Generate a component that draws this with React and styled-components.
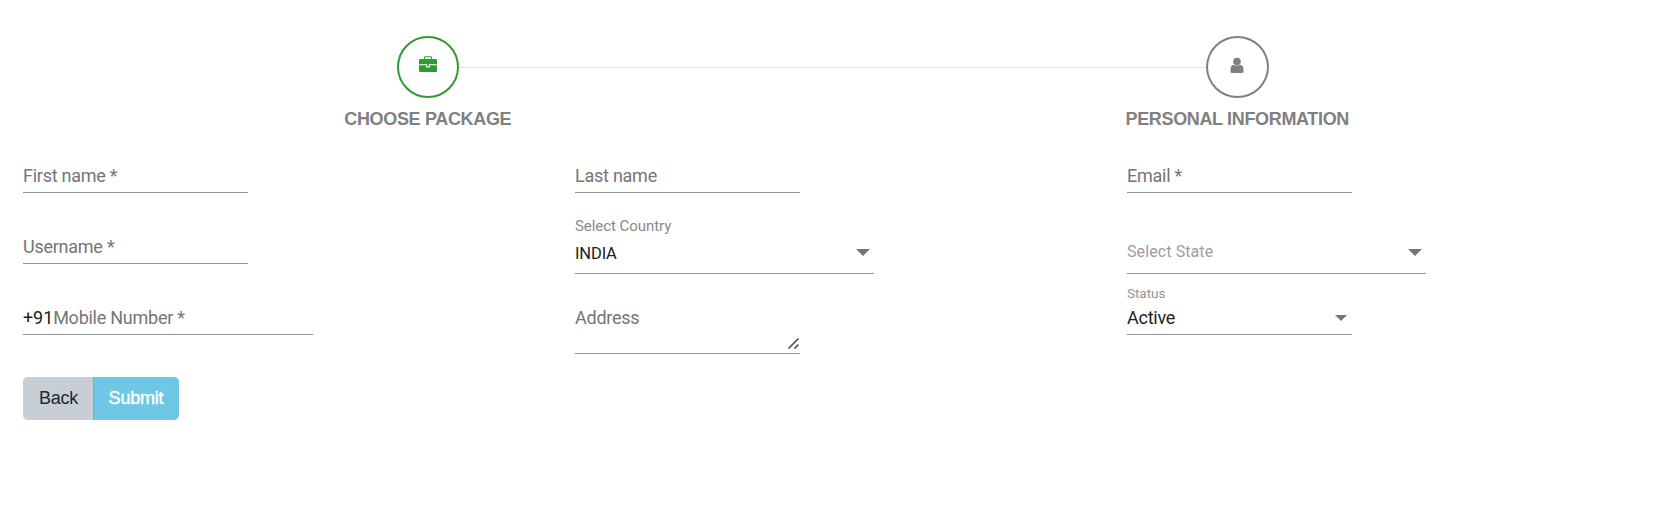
import React from "react";
import styled, { createGlobalStyle } from "styled-components";

const GlobalStyle = createGlobalStyle`
  *, *::before, *::after { box-sizing: border-box; }
  body { margin: 0; background: #fff; font-family: Roboto, sans-serif; }
`;

const Page = styled.main`
  width: 1667px;
  height: 525px;
  padding: 36px 0 0 23px;
  overflow: hidden;
`;

const Stepper = styled.nav`
  display: grid;
  grid-template-columns: 1fr 1fr;
  width: 1619px;
  height: 114px;
  background: linear-gradient(#e2e2e2, #e2e2e2) 405px 31px / 809px 1px no-repeat;
`;

const Step = styled.div`
  display: flex;
  flex-direction: column;
  align-items: center;
`;

const StepCircle = styled.div`
  display: flex;
  align-items: center;
  justify-content: center;
  width: ${(p) => (p.$active ? 62 : 63)}px;
  height: 62px;
  border: 2px solid currentColor;
  border-radius: 50%;
  background: #fff;
  color: ${(p) => (p.$active ? "#339933" : "#808080")};
`;

const StepIcon = styled.svg`
  display: block;
  width: 20px;
  height: 18px;
  margin-bottom: 4px;
`;

const StepTitle = styled.div`
  margin-top: 11px;
  font: bold 18px/20px "Liberation Sans", Arial, sans-serif;
  letter-spacing: -0.34px;
  color: #808080;
  white-space: nowrap;
`;

const Columns = styled.form`
  display: grid;
  grid-template-columns: repeat(3, 552px);
`;

const Column = styled.div`
  display: flex;
  flex-direction: column;
  align-items: flex-start;
`;

const Field = styled.div`
  display: flex;
  justify-content: space-between;
  width: ${(p) => p.$width || 225}px;
  height: ${(p) => p.$height || 27}px;
  margin-top: ${(p) => p.$gap}px;
  border-bottom: 1px solid #949494;
  white-space: nowrap;
`;

const Text = styled.span`
  font-size: ${(p) => p.$size || 18}px;
  line-height: 20px;
  letter-spacing: ${(p) => p.$tracking ?? -0.25}px;
  color: ${(p) => p.$color || "#757575"};
`;

const FloatingLabel = styled.label`
  height: 20px;
  margin-top: ${(p) => p.$gap}px;
  font-size: ${(p) => p.$size}px;
  line-height: ${(p) => p.$line || 20}px;
  letter-spacing: -0.05px;
  color: ${(p) => p.$color};
`;

const Caret = styled.span`
  width: 0;
  height: 0;
  margin: ${(p) => p.$top}px ${(p) => p.$right}px 0 0;
  border: solid transparent;
  border-width: ${(p) => p.$h}px ${(p) => p.$w}px 0;
  border-top-color: #757575;
`;

const ResizeHandle = styled.svg`
  align-self: flex-end;
  width: 11px;
  height: 11px;
  margin: 0 1px 4px 0;
`;

const ButtonGroup = styled.div`
  display: flex;
  height: 43px;
  margin-top: 42px;
`;

const Button = styled.button`
  width: ${(p) => (p.$primary ? 86 : 70)}px;
  padding: ${(p) => (p.$primary ? "0 1px 1px 0" : "0 0 1px 1px")};
  border: 0;
  border-left: ${(p) => (p.$primary ? "1px solid #5bb9d9" : "0")};
  border-radius: ${(p) => (p.$primary ? "0 5px 5px 0" : "5px 0 0 5px")};
  background: ${(p) => (p.$primary ? "#6fc7e6" : "#c8ced6")};
  color: ${(p) => (p.$primary ? "#fff" : "#23282c")};
  font: 18px/20px "Liberation Sans", Arial, sans-serif;
  -webkit-text-stroke: ${(p) => (p.$primary ? "0.4px #fff" : "0")};
  letter-spacing: ${(p) => (p.$primary ? "-0.2px" : "-0.3px")};
`;

const Briefcase = () => (
  <StepIcon viewBox="0 0 20 18" fill="currentColor">
    <path d="M6.5 3V1.5Q6.5 .8 7.3 .8h5.4q.8 0 .8.7V3" fill="none" stroke="currentColor" strokeWidth="1.1" />
    <path d="M2 3h16q1 0 1 1v4.3H1V4q0-1 1-1Z" />
    <path d="M1 9.3h7v2.2h4V9.3h7V15q0 1-1 1H2q-1 0-1-1Z" />
    <path d="M9 8.3h2v2H9Z" />
  </StepIcon>
);

const User = () => (
  <StepIcon viewBox="0 0 20 18" fill="currentColor">
    <circle cx="10" cy="5.6" r="3.8" />
    <path d="M5.8 9h1.4Q10 10.6 12.8 9h1.4q2.3 1 2.3 4.2v2.5q0 1.3-1.3 1.3H4.8q-1.3 0-1.3-1.3v-2.5Q3.5 10 5.8 9Z" />
  </StepIcon>
);

export default function App() {
  return (
    <>
      <GlobalStyle />
      <Page>
        <Stepper>
          <Step>
            <StepCircle $active><Briefcase /></StepCircle>
            <StepTitle>CHOOSE PACKAGE</StepTitle>
          </Step>
          <Step>
            <StepCircle><User /></StepCircle>
            <StepTitle>PERSONAL INFORMATION</StepTitle>
          </Step>
        </Stepper>
        <Columns>
          <Column>
            <Field $gap={16}><Text>First name *</Text></Field>
            <Field $gap={44}><Text>Username *</Text></Field>
            <Field $gap={44} $width={290}>
              <Text><Text $color="#212121" $tracking={-0.1}>+91</Text>Mobile Number *</Text>
            </Field>
            <ButtonGroup>
              <Button type="button">Back</Button>
              <Button type="button" $primary>Submit</Button>
            </ButtonGroup>
          </Column>
          <Column>
            <Field $gap={16}><Text>Last name</Text></Field>
            <FloatingLabel $gap={23} $size={15} $color="#8a8a8a">Select Country</FloatingLabel>
            <Field $gap={8} $width={299} $height={30}>
              <Text $size={16.5} $color="#212121" $tracking={-0.15}>INDIA</Text>
              <Caret $top={5} $right={4} $w={7} $h={7} />
            </Field>
            <Field $gap={34} $height={46}>
              <Text>Address</Text>
              <ResizeHandle viewBox="0 0 11 11" stroke="#424242" strokeWidth="1.5">
                <path d="M.5 10.5 10.5.5M6.5 10.5l4-4" />
              </ResizeHandle>
            </Field>
          </Column>
          <Column>
            <Field $gap={16}><Text>Email *</Text></Field>
            <Field $gap={49} $width={299} $height={32}>
              <Text $size={16} $color="#9e9e9e" $tracking={0.1}>Select State</Text>
              <Caret $top={7} $right={4} $w={7} $h={7} />
            </Field>
            <FloatingLabel $gap={9} $size={13.5} $color="#949494">Status</FloatingLabel>
            <Field $gap={5}>
              <Text $color="#212121">Active</Text>
              <Caret $top={7} $right={5} $w={6} $h={6} />
            </Field>
          </Column>
        </Columns>
      </Page>
    </>
  );
}
